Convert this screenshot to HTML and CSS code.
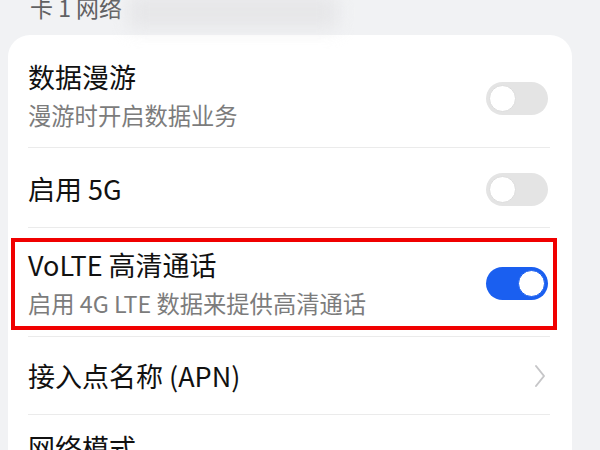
FILE: index.html
```html
<!DOCTYPE html>
<html lang="zh-CN">
<head>
  <meta charset="UTF-8" />
  <meta name="viewport" content="width=device-width, initial-scale=1.0">
  <title>移动网络</title>
  <link rel="stylesheet" href="styles.css">
</head>
<body>

  <!-- 分组标题 -->
  <div class="section-title">
    <span>卡 1 网络</span>
    <span class="smudge"></span>
  </div>

  <div class="card">
    <div class="row row-roaming">
      <div class="row-text">
        <div class="title">数据漫游</div>
        <div class="subtitle">漫游时开启数据业务</div>
      </div>
      <div class="switch"><span class="knob"></span></div>
    </div>

    <div class="row row-5g">
      <div class="row-text">
        <div class="title">启用 5G</div>
      </div>
      <div class="switch"><span class="knob"></span></div>
    </div>

    <div class="row row-volte highlight">
      <div class="row-text">
        <div class="title">VoLTE 高清通话</div>
        <div class="subtitle">启用 4G LTE 数据来提供高清通话</div>
      </div>
      <div class="switch on"><span class="knob"></span></div>
    </div>

    <div class="row row-apn">
      <div class="row-text">
        <div class="title">接入点名称 (APN)</div>
      </div>
      <svg class="chevron" width="12" height="24" viewBox="0 0 12 24">
        <polyline points="2,2 10,12 2,22" fill="none" stroke="#c6c6c8" stroke-width="2" stroke-linecap="round" stroke-linejoin="round"/>
      </svg>
    </div>

    <div class="row row-mode">
      <div class="row-text">
        <div class="title">网络模式</div>
      </div>
    </div>
  </div>

</body>
</html>
```

FILE: styles.css
```css
body {
  font-family: "Noto Sans CJK SC", "Noto Sans", sans-serif;
  margin: 0;
  width: 600px;
  height: 450px;
  overflow: hidden;
  background-color: #f1f2f4;
}

.section-title {
  display: flex;
  align-items: flex-start;
  height: 40px;
  margin-top: -5px;
  padding-left: 30px;
  font-size: 23px;
  line-height: 25px;
  color: #616163;
}

/* 标题右侧的模糊遮挡 */
.smudge {
  width: 210px;
  height: 34px;
  margin-left: 6px;
  background: #e4e4e6;
  filter: blur(9px);
  opacity: 0.8;
}

.card {
  margin: 0 28px 0 8px;
  padding: 0 22px 0 20px;
  background: #fff;
  border-radius: 22px;
}

.row {
  display: flex;
  align-items: center;
  justify-content: space-between;
  border-top: 1px solid #ebebeb;
}

.row:first-child {
  border-top: none;
}

.row-roaming {
  padding: 25px 0 17px;
}

.row-roaming .switch {
  margin-top: 6px;
}

.row-5g {
  padding: 24px 0 21px;
}

.row-volte {
  padding: 20px 0 18px;
  position: relative;
}

.row-apn {
  padding: 22px 0 21px;
}

.row-mode {
  padding: 16px 0 30px;
}

.title {
  font-size: 27px;
  line-height: 34px;
  color: #111;
}

.subtitle {
  margin-top: 6px;
  font-size: 23.3px;
  line-height: 30px;
  color: #7c7c7c;
}

/* 开关 */
.switch {
  position: relative;
  width: 62px;
  height: 33px;
  margin-right: 2px;
  border-radius: 17px;
  background: #e4e4e4;
  flex-shrink: 0;
}

.switch .knob {
  position: absolute;
  top: 3px;
  left: 3px;
  width: 25px;
  height: 25px;
  border: 1px solid #dcdcdc;
  border-radius: 50%;
  background: #fff;
}

.switch.on {
  background: #1a5ff0;
}

.switch.on .knob {
  left: auto;
  right: 3px;
  border-color: #1a5ff0;
}

.chevron {
  margin-right: 4px;
}

/* 红色标注框 */
.highlight::after {
  content: "";
  position: absolute;
  top: 10px;
  bottom: 6px;
  left: -17px;
  right: -7px;
  border: 4px solid #f00000;
}
```
